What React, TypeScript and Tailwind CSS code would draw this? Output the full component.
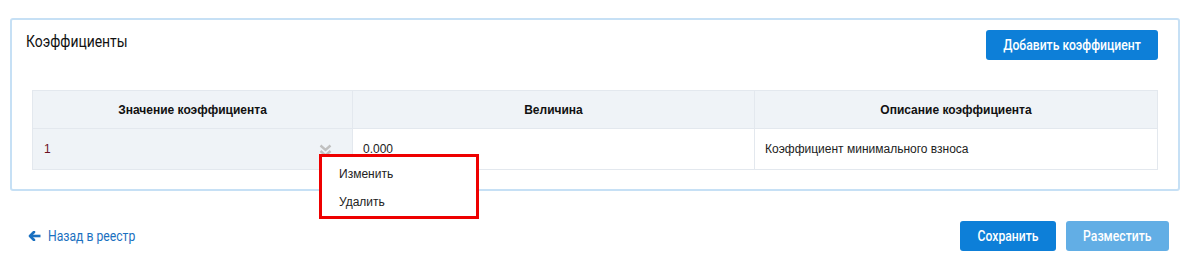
import React from 'react';

const ChevronsDown: React.FC = () => (
  <svg width="13" height="13" viewBox="0 0 13 13" aria-hidden="true">
    <polyline points="1.5,1.5 6.5,6 11.5,1.5" fill="none" stroke="#c0c0c0" strokeWidth="2.4" />
    <polyline points="1.5,7 6.5,11.5 11.5,7" fill="none" stroke="#c0c0c0" strokeWidth="2.4" />
  </svg>
);

const ArrowLeft: React.FC = () => (
  <svg width="13" height="10" viewBox="0 0 13 10" aria-hidden="true">
    <polyline points="6,1 2,5 6,9" fill="none" stroke="currentColor" strokeWidth="2.6" strokeLinecap="round" strokeLinejoin="round" />
    <line x1="2.5" y1="5" x2="12.5" y2="5" stroke="currentColor" strokeWidth="2.6" />
  </svg>
);

// condensed look: Roboto narrowed a little
const Cond: React.FC<{ children: React.ReactNode; left?: boolean }> = ({ children, left }) => (
  <span className={`inline-block whitespace-nowrap scale-x-[0.87] ${left ? 'origin-left' : 'origin-center'}`}>{children}</span>
);

export default function App() {
  return (
    <div className="w-[1199px] h-[276px] bg-white font-['Roboto',sans-serif] text-[#222]">
      <div className="pl-[10px] pt-[18px]">
        {/* Panel */}
        <section className="w-[1170px] h-[173px] border-2 border-[#c6e0f5] rounded-[3px] px-[20px] pt-[10px] relative">
          <div className="flex items-start justify-between">
            <h2 className="text-[16px] leading-[20px] mt-[2px] ml-[-6px] font-normal text-[#111]">
              <Cond left>Коэффициенты</Cond>
            </h2>
            <button className="h-[30px] w-[172px] bg-[#0d7fd8] rounded-[3px] text-white text-[14px] font-medium">
              <Cond>Добавить коэффициент</Cond>
            </button>
          </div>

          {/* Table */}
          <div className="mt-[30px] border border-[#e3e8ee] text-[12px] font-['Liberation_Sans',sans-serif]">
            <div className="grid grid-cols-[320px_402px_1fr] h-[38px] bg-[#eff3f7] border-b border-[#e3e8ee] font-bold text-[#111]">
              <div className="flex items-center justify-center border-r border-[#e3e8ee]">Значение коэффициента</div>
              <div className="flex items-center justify-center border-r border-[#e3e8ee]">Величина</div>
              <div className="flex items-center justify-center">Описание коэффициента</div>
            </div>
            <div className="grid grid-cols-[320px_402px_1fr] h-[40px] text-[#222]">
              <div className="flex items-center justify-between bg-[#eff3f7] pl-[11px] pr-[20px] border-r border-[#e3e8ee]">
                <span className="text-[#6b1022]">1</span>
                <span className="mt-[2px]"><ChevronsDown /></span>
              </div>
              <div className="flex items-center pl-[10px] border-r border-[#e3e8ee]">0.000</div>
              <div className="flex items-center pl-[10px]">Коэффициент минимального взноса</div>
            </div>
          </div>

          {/* Dropdown menu */}
          <div className="absolute left-[307px] top-[134px] w-[160px] h-[65px] bg-white border-[3px] border-[#ee0000] z-10 font-['Liberation_Sans',sans-serif] text-[12px] text-[#222]">
            <div className="pl-[17px] pt-[10px] leading-[14px]">Изменить</div>
            <div className="pl-[17px] pt-[14px] leading-[14px]">Удалить</div>
          </div>
        </section>
      </div>

      {/* Footer */}
      <div className="flex items-center justify-between pl-[28px] pr-[30px] mt-[30px]">
        <a className="flex items-center gap-[7px] text-[#1a70c0] text-[14px]">
          <ArrowLeft />
          <Cond left>Назад в реестр</Cond>
        </a>
        <div className="flex gap-[10px]">
          <button className="h-[30px] w-[96px] bg-[#0d7fd8] rounded-[3px] text-white text-[14px] font-medium">
            <Cond>Сохранить</Cond>
          </button>
          <button className="h-[30px] w-[103px] bg-[#62aee5] rounded-[3px] text-white text-[14px] font-medium">
            <Cond>Разместить</Cond>
          </button>
        </div>
      </div>
    </div>
  );
}
